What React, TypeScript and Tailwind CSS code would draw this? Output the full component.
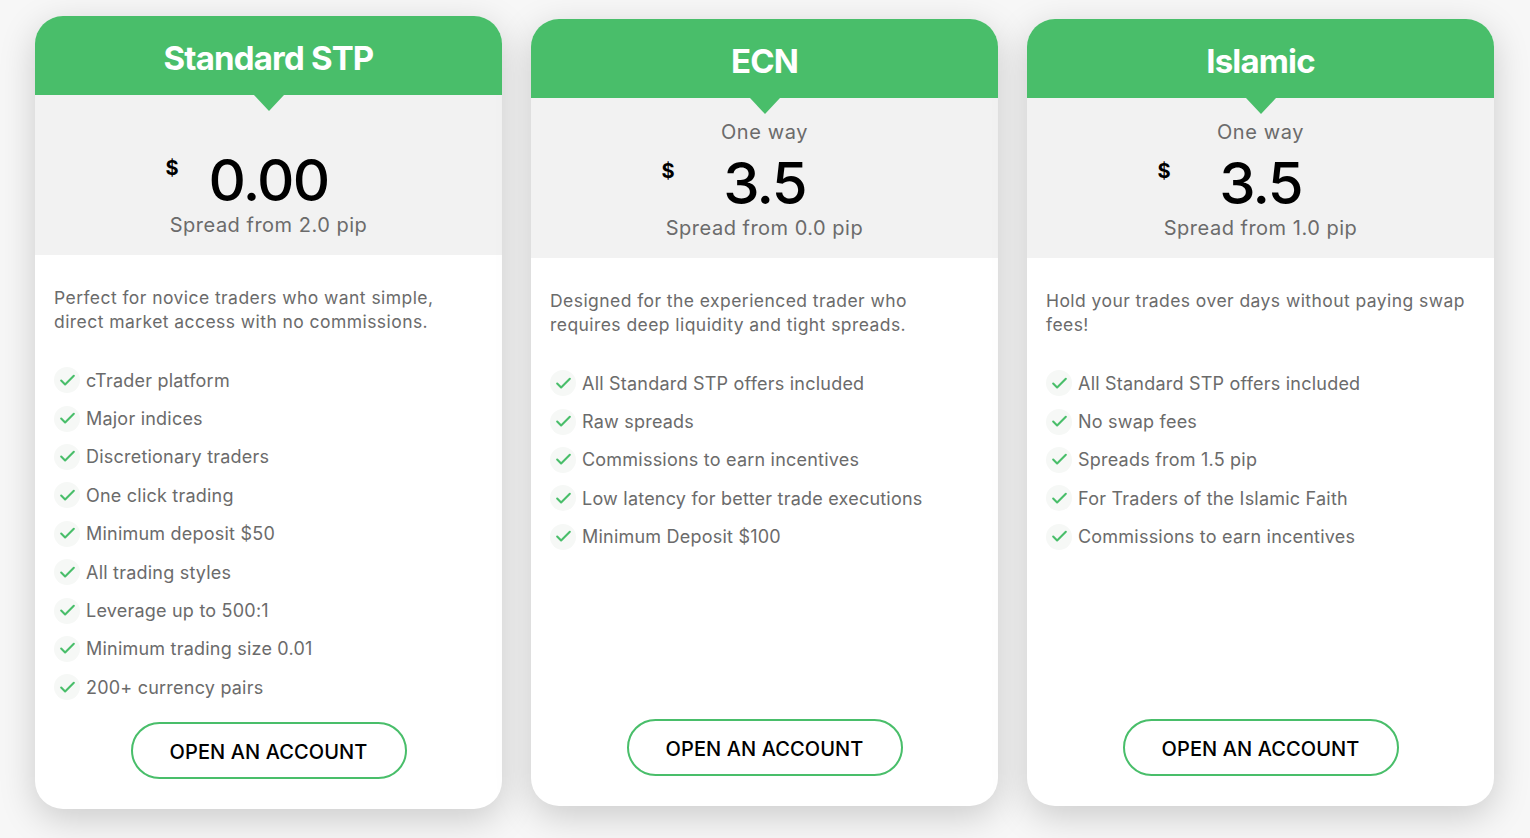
import { Check } from "lucide-react"

type Plan = {
    name: string
    oneWay: boolean
    price: string
    spread: string
    description: string[]
    features: string[]
    lifted?: boolean
}

const PLANS: Plan[] = [
    {
        name: "Standard STP",
        oneWay: false,
        price: "0.00",
        spread: "Spread from 2.0 pip",
        description: ["Perfect for novice traders who want simple,", "direct market access with no commissions."],
        features: [
            "cTrader platform",
            "Major indices",
            "Discretionary traders",
            "One click trading",
            "Minimum deposit $50",
            "All trading styles",
            "Leverage up to 500:1",
            "Minimum trading size 0.01",
            "200+ currency pairs",
        ],
        lifted: true,
    },
    {
        name: "ECN",
        oneWay: true,
        price: "3.5",
        spread: "Spread from 0.0 pip",
        description: ["Designed for the experienced trader who", "requires deep liquidity and tight spreads."],
        features: [
            "All Standard STP offers included",
            "Raw spreads",
            "Commissions to earn incentives",
            "Low latency for better trade executions",
            "Minimum Deposit $100",
        ],
    },
    {
        name: "Islamic",
        oneWay: true,
        price: "3.5",
        spread: "Spread from 1.0 pip",
        description: ["Hold your trades over days without paying swap", "fees!"],
        features: [
            "All Standard STP offers included",
            "No swap fees",
            "Spreads from 1.5 pip",
            "For Traders of the Islamic Faith",
            "Commissions to earn incentives",
        ],
    },
]

function PlanCard({ plan }: { plan: Plan }) {
    return (
        <div
            className={
                plan.lifted
                    ? "mt-[16px] h-[793px] w-[467px] flex flex-col rounded-[28px] overflow-hidden bg-white shadow-[0_10px_36px_rgba(0,0,0,0.18)]"
                    : "mt-[19px] h-[787px] w-[467px] flex flex-col rounded-[28px] overflow-hidden bg-white shadow-[0_10px_36px_rgba(0,0,0,0.18)]"
            }
        >
            {/* header */}
            <div className="relative h-[79px] shrink-0 bg-[#49be6a] flex items-center justify-center">
                <h2 className="text-[33px] font-bold tracking-[-0.025em] text-white leading-none pt-[5px]">{plan.name}</h2>
                <div className="absolute left-1/2 -translate-x-1/2 top-full w-0 h-0 border-l-[15px] border-r-[15px] border-t-[16px] border-l-transparent border-r-transparent border-t-[#49be6a]" />
            </div>

            {/* price block */}
            <div className="h-[160px] shrink-0 bg-[#f2f2f2] flex flex-col items-center pt-[22px]">
                <div className="h-[24px] text-[20px] leading-[24px] tracking-[0.03em] text-[#6b6b6b]">
                    {plan.oneWay ? "One way" : ""}
                </div>
                <div className="relative w-[180px] mt-[10px] text-center">
                    <span className="absolute right-full top-[7px] text-[20px] leading-[20px] font-bold text-black">$</span>
                    <span className="text-[58px] leading-[58px] font-medium tracking-[-0.03em] text-black">{plan.price}</span>
                </div>
                <div className="mt-[4px] text-[20px] leading-[24px] text-[#6b6b6b] tracking-[0.025em]">{plan.spread}</div>
            </div>

            {/* body */}
            <div className="flex-1 flex flex-col px-[19px] pt-[31px] pb-[30px]">
                <p className="text-[17.5px] leading-[24px] tracking-[0.025em] text-[#6b6b6b] whitespace-nowrap">
                    {plan.description.map((line, i) => (
                        <span key={i} className="block">
                            {line}
                        </span>
                    ))}
                </p>
                <ul className="mt-[27px] flex flex-col">
                    {plan.features.map((f) => (
                        <li key={f} className="h-[38.4px] flex items-center gap-[6px]">
                            <span className="w-[26px] h-[26px] rounded-full bg-[#f6f8f6] flex items-center justify-center">
                                <Check className="w-[19px] h-[19px] text-[#49be6a]" strokeWidth={2.6} />
                            </span>
                            <span className="text-[18px] tracking-[0.012em] text-[#6b6b6b]">{f}</span>
                        </li>
                    ))}
                </ul>
                <button
                    type="button"
                    className="mt-auto mx-auto w-[276px] h-[57px] pt-[3px] rounded-full border-2 border-[#49be6a] bg-white text-[20px] font-medium tracking-[0.005em] text-black"
                >
                    OPEN AN ACCOUNT
                </button>
            </div>
        </div>
    )
}

export default function App() {
    return (
        <div className="w-[1530px] h-[838px] bg-[#f7f7f7] font-['Inter',sans-serif] overflow-hidden">
            <div className="flex items-start gap-[29px] px-[35px]">
                {PLANS.map((p) => (
                    <PlanCard key={p.name} plan={p} />
                ))}
            </div>
        </div>
    )
}
